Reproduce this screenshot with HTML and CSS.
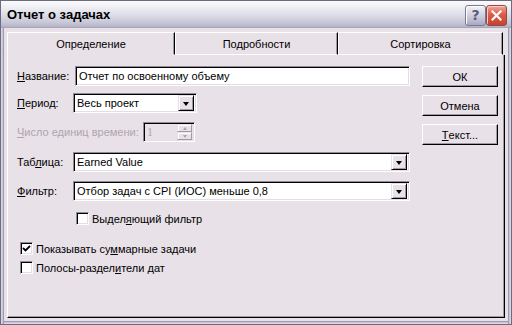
FILE: index.html
```html
<!DOCTYPE html>
<html lang="ru">
<head>
<meta charset="utf-8">
<title>Отчет о задачах</title>
<link rel="stylesheet" href="styles.css">
</head>
<body>
<div class="window">
  <div class="titlebar">
    <span class="title">Отчет о задачах</span>
    <div class="tb-buttons">
      <span class="tb-btn help">?</span>
      <span class="tb-btn close">
        <svg width="11" height="11" viewBox="0 0 11 11"><path d="M1.5 1.5 L9.5 9.5 M9.5 1.5 L1.5 9.5" stroke="#fff" stroke-width="2.2" stroke-linecap="square"/></svg>
      </span>
    </div>
  </div>
  <div class="client">
    <div class="tabs">
      <div class="tab tab1 active">Определение</div>
      <div class="tab tab2">Подробности</div>
      <div class="tab tab3">Сортировка</div>
    </div>
    <div class="panel">
      <div class="form">
        <div class="row r-name">
          <span class="label lbl-name"><u>Н</u>азвание:</span>
          <span class="field text name-field">Отчет по освоенному объему</span>
        </div>
        <div class="row r-period">
          <span class="label"><u>П</u>ериод:</span>
          <span class="field combo period">
            <span class="combo-text">Весь проект</span>
            <span class="drop"><span class="tri"></span></span>
          </span>
        </div>
        <div class="row r-count">
          <span class="label disabled"><u>Ч</u>исло единиц времени:</span>
          <span class="field spin">
            <span class="spin-text">1</span>
            <span class="spin-btns">
              <span class="spin-btn"><span class="tri-up"></span></span>
              <span class="spin-btn"><span class="tri-dn"></span></span>
            </span>
          </span>
        </div>
        <div class="row r-table">
          <span class="label">Таб<u>л</u>ица:</span>
          <span class="field combo wide">
            <span class="combo-text">Earned Value</span>
            <span class="drop"><span class="tri"></span></span>
          </span>
        </div>
        <div class="row r-filter">
          <span class="label"><u>Ф</u>ильтр:</span>
          <span class="field combo wide">
            <span class="combo-text">Отбор задач с CPI (ИОС) меньше 0,8</span>
            <span class="drop"><span class="tri"></span></span>
          </span>
        </div>
        <div class="row r-hl check-row">
          <span class="check"></span>
          <span class="check-label">Выдел<u>я</u>ющий фильтр</span>
        </div>
        <div class="row r-sum check-row">
          <span class="check checked">
            <svg width="9" height="9" viewBox="0 0 9 9"><path d="M1 4 L3.5 6.5 L8 2" fill="none" stroke="#000" stroke-width="1.8"/></svg>
          </span>
          <span class="check-label">Показывать су<u>м</u>марные задачи</span>
        </div>
        <div class="row r-bars check-row">
          <span class="check"></span>
          <span class="check-label">Полосы-раздел<u>и</u>тели дат</span>
        </div>
      </div>
      <div class="buttons">
        <span class="btn">ОК</span>
        <span class="btn">Отмена</span>
        <span class="btn"><u>Т</u>екст...</span>
      </div>
    </div>
  </div>
</div>
</body>
</html>
```

FILE: styles.css
```css
* { box-sizing: border-box; }
html, body { margin: 0; padding: 0; }
body {
  width: 512px;
  height: 325px;
  overflow: hidden;
  background: #e9e1e8;
  font-family: "Liberation Sans", Arial, sans-serif;
  font-size: 11px;
  color: #000;
}
u { text-decoration: underline; text-underline-offset: 1px; }

.window {
  width: 512px;
  height: 325px;
  border: 1px solid #6c6b80;
  background: #e9e1e8;
  display: flex;
  flex-direction: column;
  box-shadow: inset 1px 0 0 #d8d6e2, inset 2px 0 0 #c9c7d6, inset 3px 0 0 #9d9bb0,
              inset -1px 0 0 #d8d6e2, inset -2px 0 0 #c9c7d6, inset -3px 0 0 #9d9bb0,
              inset 0 -1px 0 #d8d6e2, inset 0 -2px 0 #c9c7d6, inset 0 -3px 0 #9d9bb0;
}

.titlebar {
  height: 27px;
  flex: none;
  display: flex;
  align-items: center;
  justify-content: space-between;
  padding: 0 4px 0 6px;
  background: linear-gradient(#fbfbfc 0%, #eeeef3 25%, #dcdce6 55%, #c6c5d5 85%, #b4b3c6 100%);
  border-bottom: 1px solid #a6a5ba;
}
.title {
  font-family: "Liberation Sans", Arial, sans-serif;
  font-weight: bold;
  font-size: 13px;
  color: #000;
  margin-top: 1px;
}
.tb-buttons { display: flex; gap: 0; margin-top: 2px; }
.tb-btn {
  width: 21px;
  height: 21px;
  border-radius: 3px;
  display: flex;
  align-items: center;
  justify-content: center;
}
.help {
  background: linear-gradient(#f3f3f8, #c8c8da 60%, #a9a8c2);
  border: 1px solid #7a7995;
  box-shadow: inset 1px 1px 0 #fff;
  font-family: "DejaVu Sans", sans-serif;
  font-weight: bold;
  font-size: 14px;
  color: #5a5a78;
}
.close {
  background: linear-gradient(#f2a69a, #de5a48 45%, #c8402f);
  border: 1px solid #8e4a44;
  box-shadow: inset 1px 1px 0 #f7cfc8;
}

.client {
  flex: 1;
  display: flex;
  flex-direction: column;
  padding: 4px 6px 6px 6px;
}

.tabs { display: flex; height: 23px; flex: none; }
.tab {
  height: 23px;
  display: flex;
  align-items: center;
  justify-content: center;
  border-top: 1px solid #fff;
  border-left: 1px solid #fff;
  border-right: 1px solid #000;
  box-shadow: inset -1px 0 0 #a09aa2;
  border-bottom: 1px solid #fff;
  padding-top: 1px;
}
.tab1 { width: 168px; }
.tab2 { width: 163px; }
.tab3 { width: 165px; }
.tab.active { border-bottom-color: #e9e1e8; }

.panel {
  flex: 1;
  display: flex;
  border-left: 1px solid #fff;
  border-right: 1px solid #000;
  border-bottom: 1px solid #000;
  box-shadow: inset -1px -1px 0 #a09aa2;
  padding: 11px 5px 0 9px;
  gap: 12px;
}

.form { width: 393px; display: flex; flex-direction: column; }
.row { display: flex; align-items: center; height: 20px; flex: none; }
.r-period { margin-top: 7px; }
.r-count { margin-top: 9px; }
.r-table { margin-top: 10px; }
.r-filter { margin-top: 9px; }
.r-hl { margin-top: 10px; height: 15px; padding-left: 59px; }
.r-sum { margin-top: 15px; height: 15px; padding-left: 3px; }
.r-bars { margin-top: 4px; height: 15px; padding-left: 3px; }

.label { width: 56px; flex: none; white-space: nowrap; }
.lbl-name { width: 58px; }
.label.disabled { width: 126px; color: #aca6ae; }

.field {
  height: 20px;
  background: #fff;
  border: 1px solid;
  border-color: #8f8b98 #fff #fff #8f8b98;
  box-shadow: inset 1px 1px 0 #000, inset -1px -1px 0 #e4dde4;
  display: flex;
  align-items: center;
}
.text { flex: 1; padding-left: 3px; }
.combo { padding: 2px 2px 2px 3px; }
.combo-text { flex: 1; white-space: nowrap; }
.period { width: 124px; }
.wide { flex: 1; }
.drop {
  width: 16px;
  height: 16px;
  flex: none;
  background: #e9e1e8;
  border: 1px solid;
  border-color: #e9e1e8 #000 #000 #e9e1e8;
  box-shadow: inset 1px 1px 0 #fff, inset -1px -1px 0 #a09aa2;
  display: flex;
  align-items: center;
  justify-content: center;
}
.tri {
  width: 0; height: 0;
  border-left: 3.5px solid transparent;
  border-right: 3.5px solid transparent;
  border-top: 4px solid #000;
  margin-top: 1px;
}

.spin {
  width: 52px;
  background: #e9e1e8;
  padding: 2px 2px 2px 3px;
  color: #aca6ae;
}
.spin-text { flex: 1; font-family: "Liberation Serif", serif; font-size: 12px; }
.spin-btns { display: flex; flex-direction: column; width: 15px; height: 16px; }
.spin-btn {
  flex: 1;
  background: #e9e1e8;
  border: 1px solid;
  border-color: #e9e1e8 #a09aa2 #a09aa2 #e9e1e8;
  box-shadow: inset 1px 1px 0 #fff;
  display: flex;
  align-items: center;
  justify-content: center;
}
.tri-up, .tri-dn {
  width: 0; height: 0;
  border-left: 2.5px solid transparent;
  border-right: 2.5px solid transparent;
}
.tri-up { border-bottom: 3px solid #aca6ae; }
.tri-dn { border-top: 3px solid #aca6ae; }

.check-row { align-items: center; }
.check {
  width: 13px;
  height: 13px;
  flex: none;
  background: #fff;
  border: 1px solid;
  border-color: #8f8b98 #fff #fff #8f8b98;
  box-shadow: inset 1px 1px 0 #000, inset -1px -1px 0 #e4dde4;
  display: flex;
  align-items: center;
  justify-content: center;
}
.check-label { margin-left: 3px; white-space: nowrap; }

.buttons { width: 76px; flex: none; display: flex; flex-direction: column; gap: 8px; }
.btn {
  height: 21px;
  display: flex;
  align-items: center;
  justify-content: center;
  background: #e9e1e8;
  border: 1px solid;
  border-color: #fff #000 #000 #fff;
  box-shadow: inset -1px -1px 0 #a09aa2;
}
```
